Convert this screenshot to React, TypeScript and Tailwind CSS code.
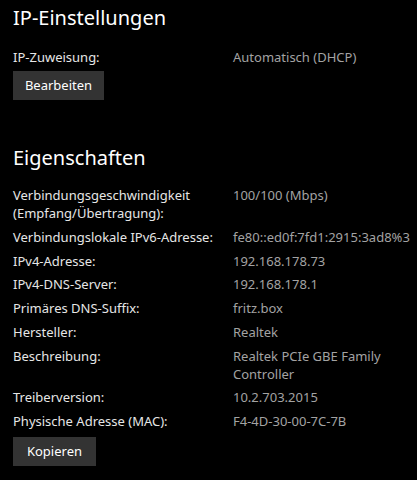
export default function App() {
    const rows: { label: string[]; value: string[] }[] = [
        { label: ['Verbindungsgeschwindigkeit', '(Empfang/Übertragung):'], value: ['100/100 (Mbps)'] },
        { label: ['Verbindungslokale IPv6-Adresse:'], value: ['fe80::ed0f:7fd1:2915:3ad8%3'] },
        { label: ['IPv4-Adresse:'], value: ['192.168.178.73'] },
        { label: ['IPv4-DNS-Server:'], value: ['192.168.178.1'] },
        { label: ['Primäres DNS-Suffix:'], value: ['fritz.box'] },
        { label: ['Hersteller:'], value: ['Realtek'] },
        { label: ['Beschreibung:'], value: ['Realtek PCIe GBE Family', 'Controller'] },
        { label: ['Treiberversion:'], value: ['10.2.703.2015'] },
        { label: ['Physische Adresse (MAC):'], value: ['F4-4D-30-00-7C-7B'] },
    ];

    return (
        <div className="w-[417px] h-[480px] bg-black text-[#e6e6e6] px-[13px] overflow-hidden font-['Noto_Sans',sans-serif]">
            {/* IP-Einstellungen */}
            <h2 className="text-[20px] leading-[26px] pt-[5px] text-white">IP-Einstellungen</h2>
            <div className="grid grid-cols-[220px_1fr] text-[13px] leading-[18px] mt-[17px]">
                <span>IP-Zuweisung:</span>
                <span className="text-[#a3a3a3]">Automatisch (DHCP)</span>
            </div>
            <button className="mt-[5px] h-[29px] w-[91px] bg-[#333333] text-[13px] text-white">
                Bearbeiten
            </button>

            {/* Eigenschaften */}
            <h2 className="text-[20px] leading-[26px] mt-[45px] text-white">Eigenschaften</h2>
            <div className="mt-[15px] flex flex-col gap-[5.75px] text-[13px] leading-[18px]">
                {rows.map((r, i) => (
                    <div key={i} className="grid grid-cols-[220px_1fr]">
                        <div>
                            {r.label.map((l) => (
                                <div key={l}>{l}</div>
                            ))}
                        </div>
                        <div className="text-[#a3a3a3]">
                            {r.value.map((v) => (
                                <div key={v}>{v}</div>
                            ))}
                        </div>
                    </div>
                ))}
            </div>
            <button className="mt-[7px] h-[29px] w-[83px] bg-[#333333] text-[13px] text-white">
                Kopieren
            </button>
        </div>
    );
}
